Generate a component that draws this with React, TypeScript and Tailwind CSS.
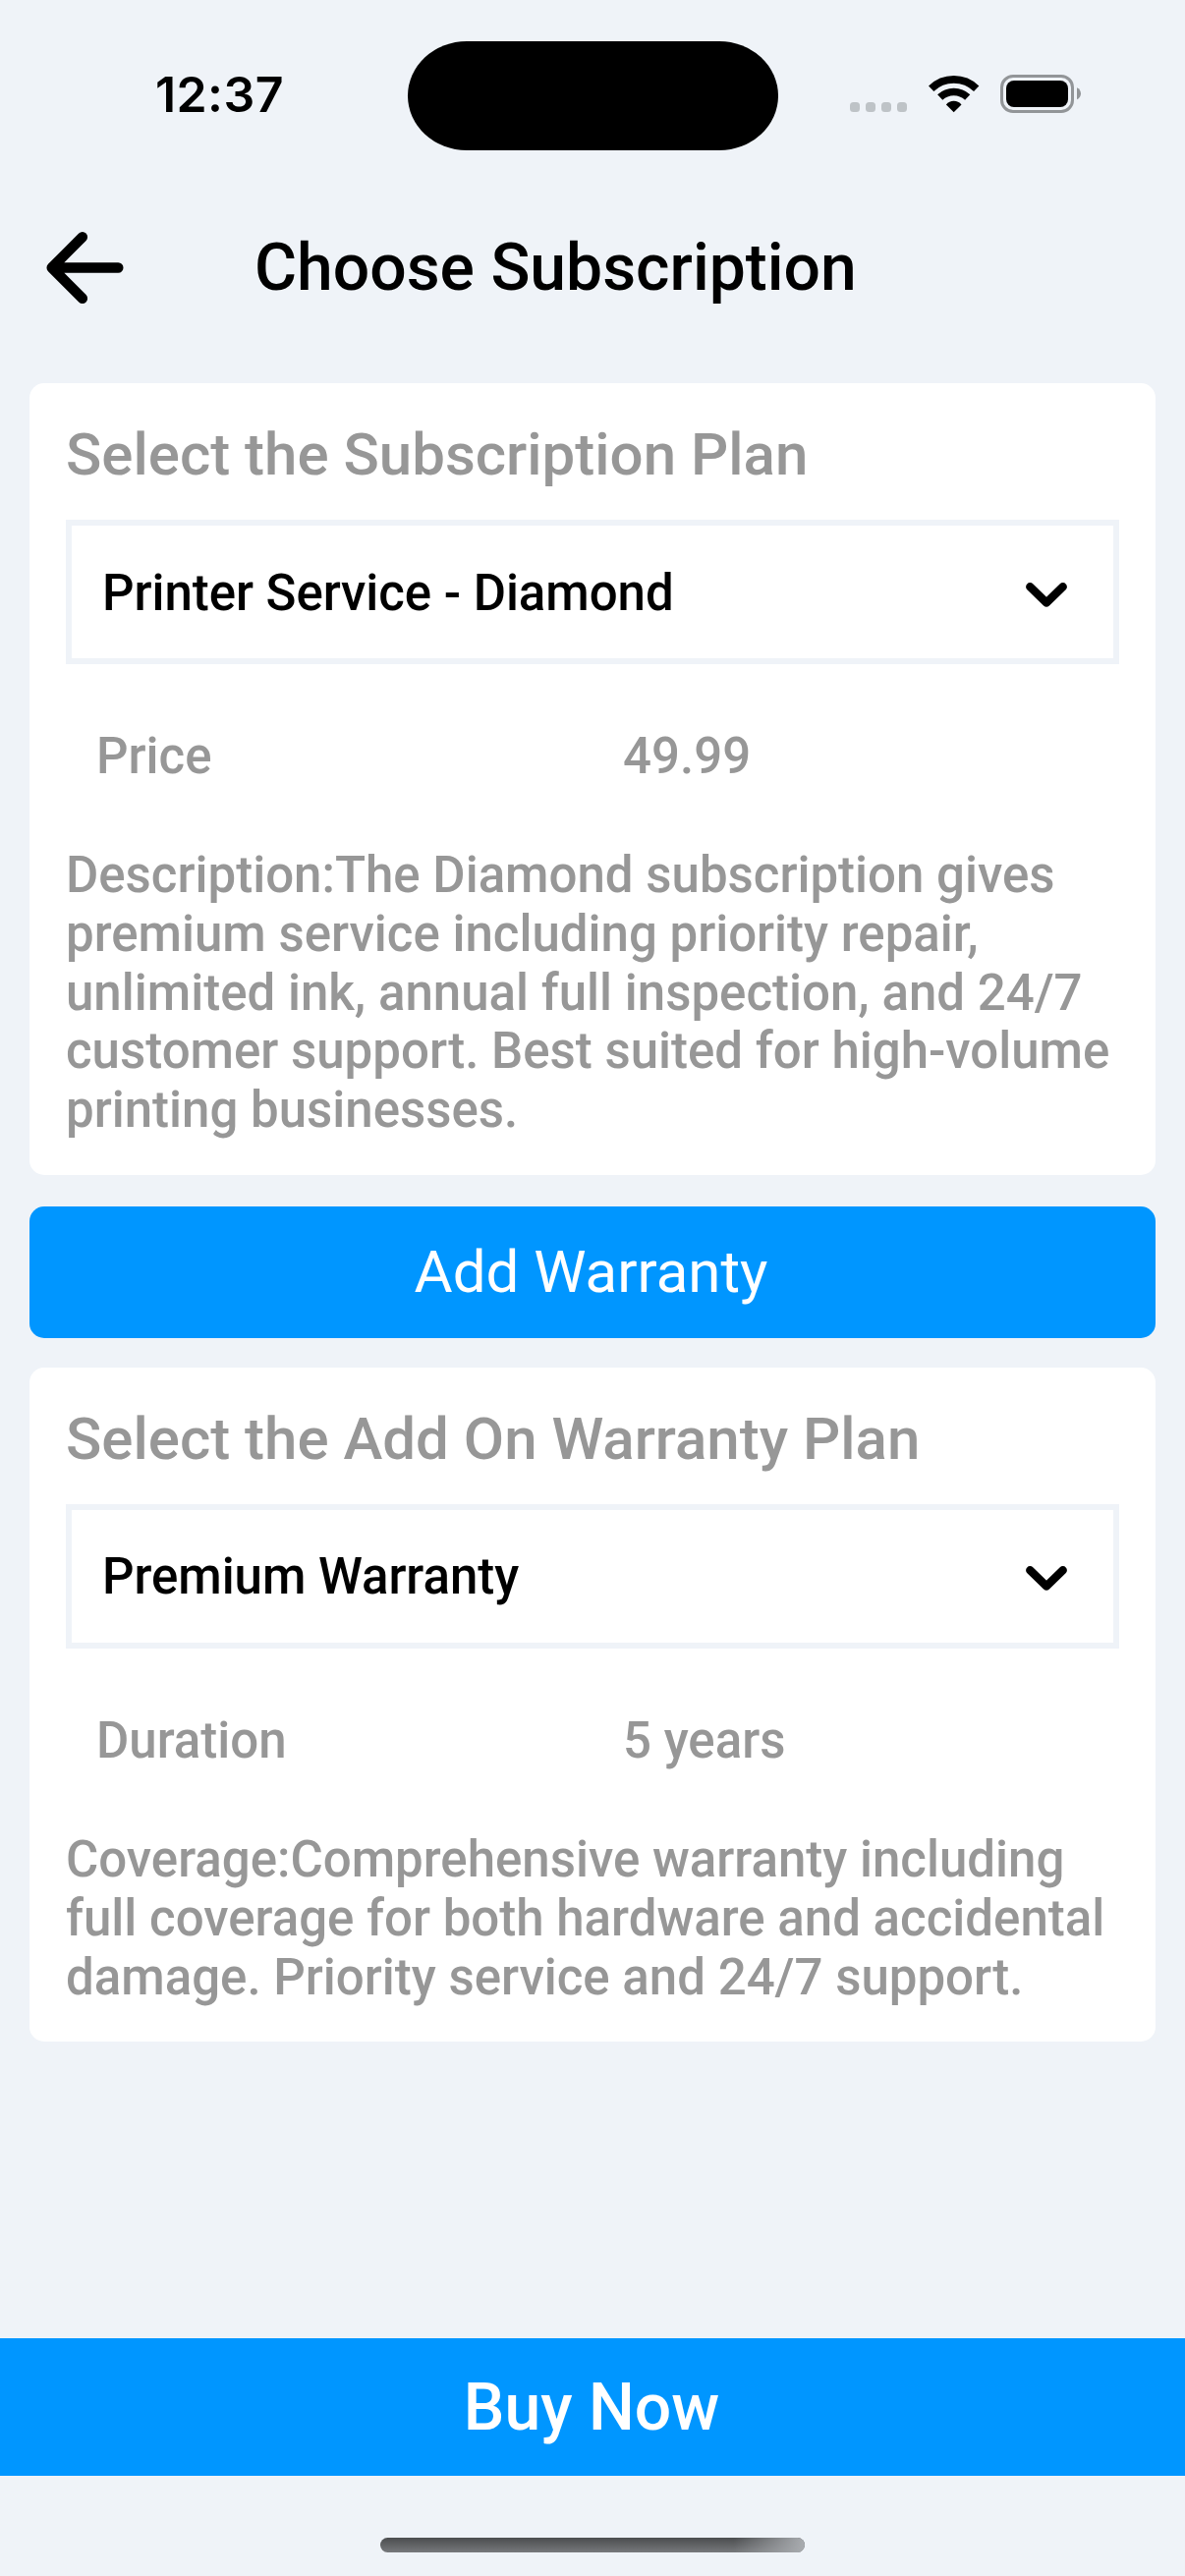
import React from "react";

function StatusBar() {
  return (
    <div className="relative flex h-[178px] shrink-0 items-start">
      <div className="absolute left-[414.500px] top-[41.500px] h-[111px] w-[377px] rounded-[60px/55.5px] bg-black" />
      <div className="ml-[158px] mt-[66px] w-[200px] font-[Inter] text-[50px] font-semibold leading-[60px] tracking-[0.4px]">12:37</div>
      <svg className="ml-[507px] mt-[75px] h-[42px] w-[236px]" viewBox="865 75 236 42">
        <g fill="#bec3c7">
          <rect x="865" y="104" width="10" height="10" rx="3.5" />
          <rect x="881" y="104" width="10" height="10" rx="3.5" />
          <rect x="897" y="104" width="10" height="10" rx="3.5" />
          <rect x="913" y="104" width="10" height="10" rx="3.5" />
        </g>
        <g fill="none" stroke="#000" strokeWidth="7.6">
          <path d="M947.7 90.2a33 33 0 0 1 46 0" />
          <path d="M956.7 99a20.500 20.500 0 0 1 28 0" />
        </g>
        <path d="M970.700 114.200l-7.800-7.800a10.300 10.300 0 0 1 15.600 0z" />
        <rect x="1019.5" y="77.5" width="72" height="36" rx="11.500" fill="none" stroke="#929598" strokeWidth="3" />
        <rect x="1024" y="82" width="63" height="27" rx="8" />
        <path d="M1096 89.300c5.300 2 5.300 10 0 12z" fill="#929598" />
      </svg>
    </div>
  );
}

function Header() {
  return (
    <header className="flex h-[212px] shrink-0 items-start">
      <svg className="ml-[31px] mt-[39px] h-[111px] w-[111px]" viewBox="0 0 512 512" fill="none" stroke="#000" strokeWidth="48" strokeLinecap="round" strokeLinejoin="round">
        <path d="M244 400L100 256l144-144M120 256h292" />
      </svg>
      <h1 className="ml-[117px] mt-[56px] whitespace-nowrap text-[66px] font-medium leading-[77px]">Choose Subscription</h1>
    </header>
  );
}

function PlanCard(props: { title: string; selected: string; label: string; value: string; text: string }) {
  return (
    <section className="rounded-[15px] bg-white px-[37px] pb-[36px] pt-[38px] text-[#979797]">
      <h2 className="whitespace-nowrap text-[60px] font-medium leading-[70px]">{props.title}</h2>
      <div className="mt-[31px] flex h-[147px] items-center justify-between border-[6px] border-[#eff3f8] pl-[31px] pr-[47px] pt-[2px] text-[51px] font-medium leading-[60px] text-black">
        <span className="tracking-[-0.05px]">{props.selected}</span>
        <svg className="mt-[3px] h-[25px] w-[42px]" viewBox="0 0 42 25" fill="none" stroke="#000" strokeWidth="8.4" strokeLinecap="round" strokeLinejoin="round">
          <path d="M4.300 4.300L21 20.400L37.700 4.300" />
        </svg>
      </div>
      <div className="mt-[64px] grid grid-cols-2 pl-[31px] text-[51px] font-medium leading-[60px]">
        <span>{props.label}</span>
        <span className="pl-[15.500px]">{props.value}</span>
      </div>
      <p className="mt-[61px] text-[51px] font-medium leading-[59.8px]">{props.text}</p>
    </section>
  );
}

export default function App() {
  return (
    <div className="flex h-[2622px] w-[1206px] flex-col overflow-hidden bg-[#eff3f8] font-[Roboto] text-black">
      <StatusBar />
      <Header />
      <main className="flex flex-col px-[30px]">
        <PlanCard
          title="Select the Subscription Plan"
          selected="Printer Service - Diamond"
          label="Price"
          value="49.99"
          text="Description:The Diamond subscription gives premium service including priority repair, unlimited ink, annual full inspection, and 24/7 customer support. Best suited for high-volume printing businesses."
        />
        <button className="mb-[30px] mt-[32px] h-[134px] rounded-[15px] bg-[#0096ff] pr-[3px] text-[60px] leading-[70px] text-white">Add Warranty</button>
        <PlanCard
          title="Select the Add On Warranty Plan"
          selected="Premium Warranty"
          label="Duration"
          value="5 years"
          text="Coverage:Comprehensive warranty including full coverage for both hardware and accidental damage. Priority service and 24/7 support."
        />
      </main>
      <button className="mt-auto h-[140px] shrink-0 bg-[#0096ff] pr-[2px] text-[66px] font-medium leading-[77px] text-white">Buy Now</button>
      <div className="flex h-[102px] shrink-0 justify-center pt-[63px]">
        <div className="flex h-[15px] w-[432px] justify-end overflow-hidden rounded-full bg-linear-to-b from-[#4b4d4f] to-[#77797c]">
          <div className="h-full w-[72px] bg-linear-to-r from-[#a9acb0]/0 to-[#a9acb0]" />
        </div>
      </div>
    </div>
  );
}
